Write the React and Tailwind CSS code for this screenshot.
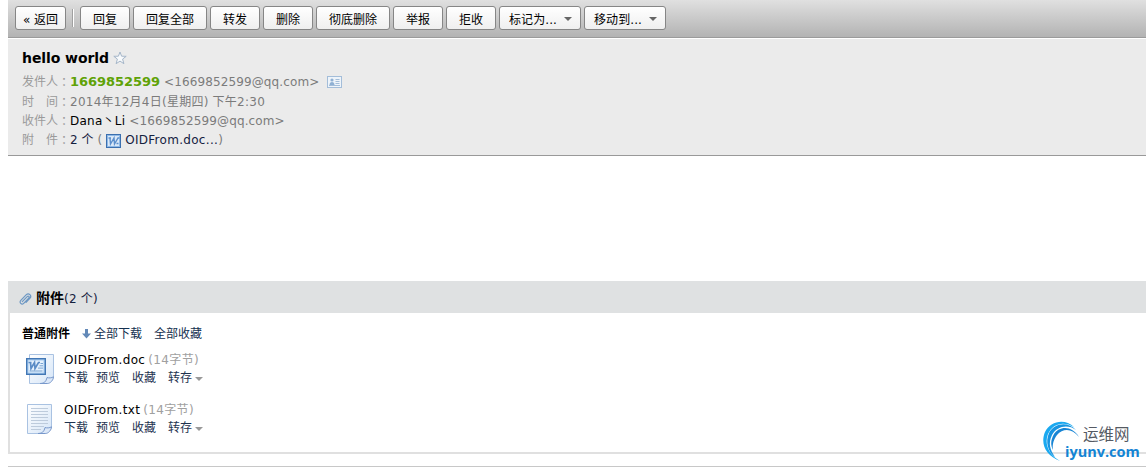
import React from 'react'

const actions = [
  { label: '回复', width: 'w-[50px]' },
  { label: '回复全部', width: 'w-[74px]' },
  { label: '转发', width: 'w-[50px]' },
  { label: '删除', width: 'w-[50px]' },
  { label: '彻底删除', width: 'w-[74px]' },
  { label: '举报', width: 'w-[50px]' },
  { label: '拒收', width: 'w-[50px]' },
  { label: '标记为...', width: 'w-[82px]', menu: true },
  { label: '移动到...', width: 'w-[82px]', menu: true },
]

const files = [
  { name: 'OIDFrom.doc', size: '(14字节)', type: 'doc' },
  { name: 'OIDFrom.txt', size: '(14字节)', type: 'txt' },
]

const Caret = ({ className }) => (
  <svg viewBox="0 0 8 4" className={`w-2 h-1 shrink-0 ${className}`} fill="currentColor">
    <path d="M0 0h8L4 4z" />
  </svg>
)

const ToolButton = ({ label, width, menu }) => (
  <button
    className={`${width} h-6 shrink-0 flex items-center justify-center rounded-[3px] border border-[#868686] bg-gradient-to-b from-white to-[#efefef] text-black whitespace-nowrap`}
  >
    <span className={menu ? 'pt-[3px] pl-px tracking-[0.1px]' : 'pt-[3px]'}>{label}</span>
    {menu && <Caret className="ml-[7px] mt-px text-[#666]" />}
  </button>
)

const Toolbar = () => (
  <div className="h-[38px] shrink-0 flex pt-1.5 pl-[7px] gap-[3px] border-b border-[#9b9b9b] bg-gradient-to-b from-[#e0e0e0] to-[#b3b3b3]">
    <ToolButton label="« 返回" width="w-[51px]" />
    <div className="w-2 h-6 flex justify-end items-center shrink-0">
      <div className="w-0.5 h-[18px] mr-[3px] bg-white border-l border-[#a0a0a0]"></div>
    </div>
    {actions.map((a) => (
      <ToolButton key={a.label} {...a} />
    ))}
  </div>
)

const Star = () => (
  <svg viewBox="0 0 14 14" className="w-3.5 h-3.5 ml-1" fill="#f8fafc" stroke="#a5b6c9" strokeWidth="1">
    <path d="M7 1l1.6 4.2 4.6.1-3.6 2.8 1.3 4.6L7 10.1l-3.9 2.6 1.3-4.6L.8 5.3l4.6-.1z" />
  </svg>
)

const ContactCard = () => (
  <svg viewBox="0 0 15 12" className="w-[15px] h-3 ml-2" fill="none" stroke="#a3bdd9">
    <rect x=".5" y=".5" width="14" height="11" fill="#eef4fa" />
    <circle cx="5" cy="4" r="1.6" fill="#8fb0d3" stroke="none" />
    <path d="M2.5 9c0-2 1-3 2.5-3s2.500 1 2.500 3z" fill="#8fb0d3" stroke="none" />
    <path d="M8.500 3.500h4M8.500 5.500h4M8.500 7.500h4M2 9.500h11" />
  </svg>
)

const WordBadge = () => (
  <svg viewBox="0 0 15 14" className="w-[15px] h-3.5 ml-1 mr-[3px] mt-0.5" fill="none">
    <rect x=".5" y=".5" width="14" height="13" fill="#8fb9e6" stroke="#3b6faf" />
    <rect x="2" y="2" width="11" height="10" fill="#dbe9f8" />
    <path d="M2.500 4H5M4 4l.5 6L8 4l.5 6L12 4h1.500M10.500 9.500h2" stroke="#5c8fcc" strokeWidth="1.400" />
  </svg>
)

const Clip = () => (
  <svg viewBox="0 0 14 14" className="w-3.5 h-3.5 ml-2.5 mr-1 mt-1" fill="none" stroke="#6c97c3" strokeWidth="1.200" strokeLinecap="round">
    <path d="M4.300 9.600l4.900-5c1.200-1.200 2.700.2 1.500 1.500l-5 5.200c-2 2-5-.7-2.900-2.900l5.300-5.500c2.700-2.700 6.200.8 3.700 3.500l-3.700 3.900" />
  </svg>
)

const DownArrow = () => (
  <svg viewBox="0 0 9 10" className="w-[9px] h-2.5 ml-3 mr-[3px]" fill="#6389b8">
    <path d="M3 0h3v4.500h3L4.500 9.500 0 4.500h3z" />
  </svg>
)

const FileIcon = ({ type }) => (
  <svg viewBox="0 0 30 32" className="w-[30px] h-8 shrink-0" fill="none">
    <defs>
      <linearGradient id={`page-${type}`} x1="0" y1="0" x2="1" y2="1">
        <stop offset="0" stopColor="#fff" />
        <stop offset="1" stopColor="#d5e5f7" />
      </linearGradient>
    </defs>
    {type === 'doc' ? (
      <>
        <path d="M3.500 1.500h24v22.500l-6 6.500h-18z" fill="url(#page-doc)" stroke="#a9c2e2" />
        <path d="M14 30.500c4-.2 6-1.500 7-6 2 .7 4.500.5 6.500-.7 0 3-3 6.700-6 6.700z" fill="#dce8f8" stroke="#7898cb" />
        <rect x=".7" y="5.700" width="18.600" height="15.600" fill="#a9cdf0" stroke="#4277b5" strokeWidth="1.400" />
        <rect x="2.500" y="7.500" width="15" height="12" fill="#e4f0fc" />
        <path d="M2.500 9.500h3M4.500 9.500L5 15.500l3.500-6 .5 6L12.500 9.500H14" stroke="#5b8cc6" strokeWidth="1.700" />
        <path d="M3.500 18h13M14.500 10.500h2.500M13.500 12.800h3.500M12 15.100h5" stroke="#77a3d3" />
      </>
    ) : (
      <>
        <path d="M1.500 1.500h24v22.500l-6 6.500h-18z" fill="url(#page-txt)" stroke="#a9c2e2" />
        <path d="M5 5.500h17M5 8.500h17M5 11.500h17M5 14.500h17M5 17.500h17M5 20.500h17M5 23.500h13M5 26.500h10" stroke="#bdcbdc" />
        <path d="M12 30.500c4-.2 6-1.500 7-6 2 .7 4.500.5 6.500-.7 0 3-3 6.700-6 6.700z" fill="#dce8f8" stroke="#7898cb" />
      </>
    )}
  </svg>
)

const Label = ({ children }) => (
  <span className="w-12 shrink-0 flex text-[#9a9a9a]">
    {children}
    <span className="font-['Noto_Sans_CJK_TC',sans-serif]" lang="zh-TW">：</span>
  </span>
)

const MailHeader = () => (
  <div className="h-[117px] mt-px shrink-0 pl-3.5 pt-[9px] bg-[#ebebeb] border-b border-[#999] text-[#7b7b7b]">
    <div className="h-5 flex items-center">
      <h1 className="text-sm font-bold text-black tracking-[-0.08px]">hello world</h1>
      <Star />
    </div>
    <div className="h-5 mt-1 flex items-center">
      <Label>发件人</Label>
      <b className="text-[13px] tracking-[-0.05px] text-[#5fa207]">1669852599</b>
      <span className="ml-1 tracking-[0.12px]">&lt;1669852599@qq.com&gt;</span>
      <ContactCard />
    </div>
    <div className="h-[19px] flex items-center">
      <Label>时　间</Label>
      <span className="tracking-[0.25px]">2014年12月4日(星期四) 下午2:30</span>
    </div>
    <div className="h-[19px] flex items-center">
      <Label>收件人</Label>
      <span className="text-black tracking-[0.25px]">Dana丶Li</span>
      <span className="ml-1 tracking-[0.12px]">&lt;1669852599@qq.com&gt;</span>
    </div>
    <div className="h-[19px] flex items-center">
      <Label>附　件</Label>
      <span className="text-[#14213f]">2 个</span>
      <span className="ml-1">(</span>
      <WordBadge />
      <span className="ml-px text-[#14213f] tracking-[0.3px]">OIDFrom.doc...</span>
      <span>)</span>
    </div>
  </div>
)

const FileRow = ({ name, size, type }) => (
  <div className="h-[50px] flex pl-4">
    <FileIcon type={type} />
    <div className="ml-2 -mt-[3px]">
      <div className="h-[19px] flex items-center">
        <span className="text-black tracking-[0.36px]">{name}</span>
        <span className="ml-[3px] text-[#a0a0a0] tracking-[0.35px]">{size}</span>
      </div>
      <div className="h-[18px] flex items-center text-[#1e3350]">
        <span>下载</span>
        <span className="ml-2">预览</span>
        <span className="ml-3">收藏</span>
        <span className="ml-3">转存</span>
        <Caret className="ml-[3px] mt-0.5 text-[#999]" />
      </div>
    </div>
  </div>
)

const Attachments = () => (
  <div className="mt-[125px] h-[173px] shrink-0">
    <div className="h-8 flex items-center bg-[#dfe1e2] text-[#14213f]">
      <Clip />
      <b className="pt-0.5 text-sm leading-[18px] text-black">附件</b>
      <span className="pt-[3px] tracking-[0.2px]">(2 个)</span>
    </div>
    <div className="h-[141px] border-l-2 border-b-2 border-[#e0e0e0]">
      <div className="h-10 flex items-center pt-0.5 pl-3 text-[#14304f]">
        <b className="text-black">普通附件</b>
        <DownArrow />
        <span>全部下载</span>
        <span className="ml-3">全部收藏</span>
      </div>
      {files.map((f) => (
        <FileRow key={f.name} {...f} />
      ))}
    </div>
  </div>
)

const Watermark = () => (
  <div className="absolute left-[1041px] top-[419px] w-[105px] h-[44px]">
    <svg viewBox="0 0 42 44" className="absolute left-0 top-0 w-[42px] h-11">
      <path d="M33 8C24-1 9 2 4 13-1 25 5 37 19 42 8 36 3 25 7 15 12 4 23 2 33 8z" fill="#1aa9f0" />
      <path d="M35 11C27 2 13 4 8 14 4 23 7 33 14 38 9 31 7 24 11 16 16 7 27 5 35 11z" fill="#1795e2" />
      <path d="M38 18C31 6 18 7 13 15 9 22 10 27 12 31 11 25 13 20 16 16 22 9 31 9 38 18z" fill="#1784d4" />
    </svg>
    <div className="absolute left-[42px] top-[5px] text-[15.500px] leading-[18px] text-[#555a63] whitespace-nowrap font-['Noto_Sans_CJK_SC',sans-serif]">运维网</div>
    <div className="absolute left-[24px] top-[25px] text-[14.500px] leading-4 font-bold text-[#1384d4] font-['Open_Sans',sans-serif]">iyunv.com</div>
  </div>
)

const App = () => {
  return (
    <div className="relative w-full h-[468px] overflow-hidden bg-white text-xs leading-[18px] whitespace-nowrap font-['DejaVu_Sans','Noto_Sans_CJK_SC',sans-serif]">
      <div className="ml-2 flex flex-col">
        <Toolbar />
        <MailHeader />
        <Attachments />
        <div className="mt-3 h-px bg-[#c8c8c8]"></div>
      </div>
      <Watermark />
    </div>
  )
}

export default App
